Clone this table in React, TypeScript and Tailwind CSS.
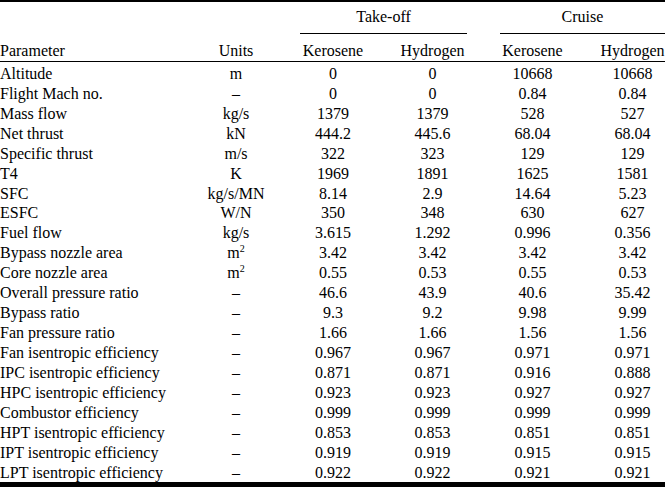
import React from 'react';

type Row = {
    name: string;
    unit: React.ReactNode;
    values: [string, string, string, string];
};

const m2 = (
    <span>
        m<span className="relative -top-[6px] text-[10px] leading-none">2</span>
    </span>
);

const rows: Row[] = [
    { name: 'Altitude', unit: 'm', values: ['0', '0', '10668', '10668'] },
    { name: 'Flight Mach no.', unit: '–', values: ['0', '0', '0.84', '0.84'] },
    { name: 'Mass flow', unit: 'kg/s', values: ['1379', '1379', '528', '527'] },
    { name: 'Net thrust', unit: 'kN', values: ['444.2', '445.6', '68.04', '68.04'] },
    { name: 'Specific thrust', unit: 'm/s', values: ['322', '323', '129', '129'] },
    { name: 'T4', unit: 'K', values: ['1969', '1891', '1625', '1581'] },
    { name: 'SFC', unit: 'kg/s/MN', values: ['8.14', '2.9', '14.64', '5.23'] },
    { name: 'ESFC', unit: 'W/N', values: ['350', '348', '630', '627'] },
    { name: 'Fuel flow', unit: 'kg/s', values: ['3.615', '1.292', '0.996', '0.356'] },
    { name: 'Bypass nozzle area', unit: m2, values: ['3.42', '3.42', '3.42', '3.42'] },
    { name: 'Core nozzle area', unit: m2, values: ['0.55', '0.53', '0.55', '0.53'] },
    { name: 'Overall pressure ratio', unit: '–', values: ['46.6', '43.9', '40.6', '35.42'] },
    { name: 'Bypass ratio', unit: '–', values: ['9.3', '9.2', '9.98', '9.99'] },
    { name: 'Fan pressure ratio', unit: '–', values: ['1.66', '1.66', '1.56', '1.56'] },
    { name: 'Fan isentropic efficiency', unit: '–', values: ['0.967', '0.967', '0.971', '0.971'] },
    { name: 'IPC isentropic efficiency', unit: '–', values: ['0.871', '0.871', '0.916', '0.888'] },
    { name: 'HPC isentropic efficiency', unit: '–', values: ['0.923', '0.923', '0.927', '0.927'] },
    { name: 'Combustor efficiency', unit: '–', values: ['0.999', '0.999', '0.999', '0.999'] },
    { name: 'HPT isentropic efficiency', unit: '–', values: ['0.853', '0.853', '0.851', '0.851'] },
    { name: 'IPT isentropic efficiency', unit: '–', values: ['0.919', '0.919', '0.915', '0.915'] },
    { name: 'LPT isentropic efficiency', unit: '–', values: ['0.922', '0.922', '0.921', '0.921'] },
];

// param | units | gap | TO kero | gap | TO h2 | gap | CR kero | gap | CR h2
const cols = 'grid grid-cols-[200px_72px_28px_66px_32px_69px_33px_65px_35px_65px]';

export default function App() {
    return (
        <div className="w-[665px] h-[487px] bg-white text-black font-['Liberation_Serif','Times_New_Roman',serif] text-[16px] leading-[19.95px] overflow-hidden">
            <div className="h-[2px] bg-black" />

            {/* group headers */}
            <div className={`${cols} pt-[5px]`}>
                <div className="col-start-4 col-span-3 text-center">
                    <div className="pb-[6px] border-b border-black">Take-off</div>
                </div>
                <div className="col-start-8 col-span-3 text-center">
                    <div className="pb-[6px] border-b border-black">Cruise</div>
                </div>
            </div>

            {/* sub headers */}
            <div className={`${cols} pt-[7px] border-b border-black`}>
                <div>Parameter</div>
                <div className="text-center">Units</div>
                <div />
                <div className="text-center">Kerosene</div>
                <div />
                <div className="text-center">Hydrogen</div>
                <div />
                <div className="text-center">Kerosene</div>
                <div />
                <div className="text-center">Hydrogen</div>
            </div>

            {/* body */}
            <div className="pt-[2px]">
                {rows.map((r) => (
                    <div key={r.name} className={`${cols} h-[19.95px]`}>
                        <div className="whitespace-nowrap">{r.name}</div>
                        <div className="text-center">{r.unit}</div>
                        <div />
                        <div className="text-center">{r.values[0]}</div>
                        <div />
                        <div className="text-center">{r.values[1]}</div>
                        <div />
                        <div className="text-center">{r.values[2]}</div>
                        <div />
                        <div className="text-center">{r.values[3]}</div>
                    </div>
                ))}
            </div>

            <div className="-mt-[1px] h-[8px] bg-black" />
        </div>
    );
}
